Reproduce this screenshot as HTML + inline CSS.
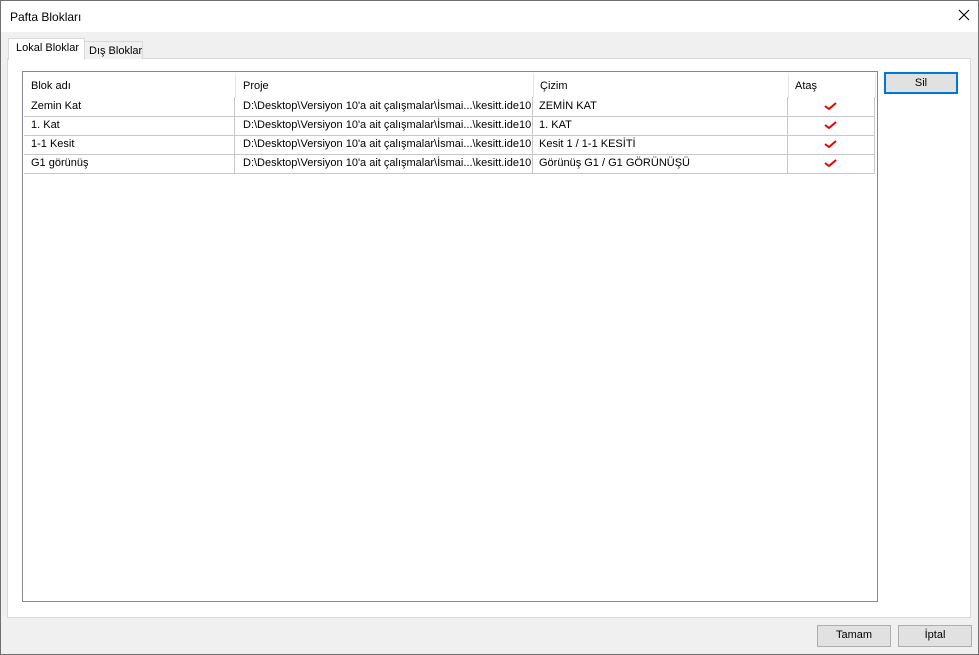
<html><head><style>
body{margin:0;width:979px;height:655px;overflow:hidden;font-family:"Liberation Sans",sans-serif;font-size:11px;color:#000;}
.win{position:absolute;left:0;top:0;width:977px;height:653px;border:1px solid #707070;background:#f0f0f0;}
.title{position:absolute;left:0;top:0;width:977px;height:31px;background:#fff;}
.a{position:absolute;white-space:nowrap;}
.btn{position:absolute;background:#e1e1e1;border:1px solid #adadad;text-align:center;box-sizing:border-box;line-height:19px;}
.cell{position:absolute;height:19px;line-height:19px;white-space:nowrap;overflow:hidden;}
</style></head><body>
<div class="win">
<div class="title"><span class="a" style="left:9px;top:9px;font-size:12px">Pafta Blokları</span>
<svg class="a" style="left:957px;top:8px" width="12" height="12"><path d="M1 1L11 11M11 1L1 11" stroke="#000" stroke-width="1.1"/></svg></div>
<div class="a" style="left:6px;top:57px;width:962px;height:558px;background:#fff;border:1px solid #d9d9d9"></div>
<div class="a" style="left:82px;top:40px;width:58px;height:17px;background:#f0f0f0;border:1px solid #d9d9d9;border-bottom:none"><span class="a" style="left:5px;top:3px">Dış Bloklar</span></div>
<div class="a" style="left:7px;top:37px;width:75px;height:21px;background:#fff;border:1px solid #d9d9d9;border-bottom:none"><span class="a" style="left:7px;top:3px">Lokal Bloklar</span></div>
<div class="a" style="left:21px;top:70px;width:854px;height:529px;background:#fff;border:1px solid #828790">
 <div class="a" style="left:212px;top:2px;width:1px;height:24px;background:#e5e5e5"></div>
 <div class="a" style="left:510px;top:2px;width:1px;height:24px;background:#e5e5e5"></div>
 <div class="a" style="left:765px;top:2px;width:1px;height:24px;background:#e5e5e5"></div>
 <div class="a" style="left:852px;top:2px;width:1px;height:24px;background:#e5e5e5"></div>
 <span class="a" style="left:8px;top:8px">Blok adı</span>
 <span class="a" style="left:220px;top:8px">Proje</span>
 <span class="a" style="left:517px;top:8px">Çizim</span>
 <span class="a" style="left:772px;top:8px">Ataş</span>
</div>
<div id="rows"></div>
<div class="btn" style="left:883px;top:71px;width:74px;height:22px;border:2px solid #0078d7;line-height:18px">Sil</div>
<div class="btn" style="left:816px;top:624px;width:74px;height:22px">Tamam</div>
<div class="btn" style="left:897px;top:624px;width:74px;height:22px">İptal</div>
</div>
<script>
var d=[["Zemin Kat","ZEMİN KAT"],["1. Kat","1. KAT"],["1-1 Kesit","Kesit 1 / 1-1 KESİTİ"],["G1 görünüş","Görünüş G1 / G1 GÖRÜNÜŞÜ"]];
var h="";
d.forEach(function(r,i){var y=96+i*19;
h+='<div class="cell" style="left:30px;top:'+y+'px;width:200px">'+r[0]+'</div>';
h+='<div class="cell" style="left:242px;top:'+y+'px;width:288px">D:\\Desktop\\Versiyon 10\'a ait çalışmalar\\İsmai...\\kesitt.ide10</div>';
h+='<div class="cell" style="left:538px;top:'+y+'px;width:245px">'+r[1]+'</div>';
h+='<svg class="a" style="left:823px;top:'+(y+5)+'px" width="14" height="9"><path d="M1 4L5 7L12 1" stroke="#e00" stroke-width="2" fill="none"/></svg>';
h+='<div class="a" style="left:23px;top:'+(y+19)+'px;width:851px;height:1px;background:#c8c8c8"></div>';
[233,531,786,873].forEach(function(x){h+='<div class="a" style="left:'+x+'px;top:'+y+'px;width:1px;height:19px;background:#c8c8c8"></div>';});
});
document.getElementById("rows").outerHTML=h;
</script>
</body></html>
